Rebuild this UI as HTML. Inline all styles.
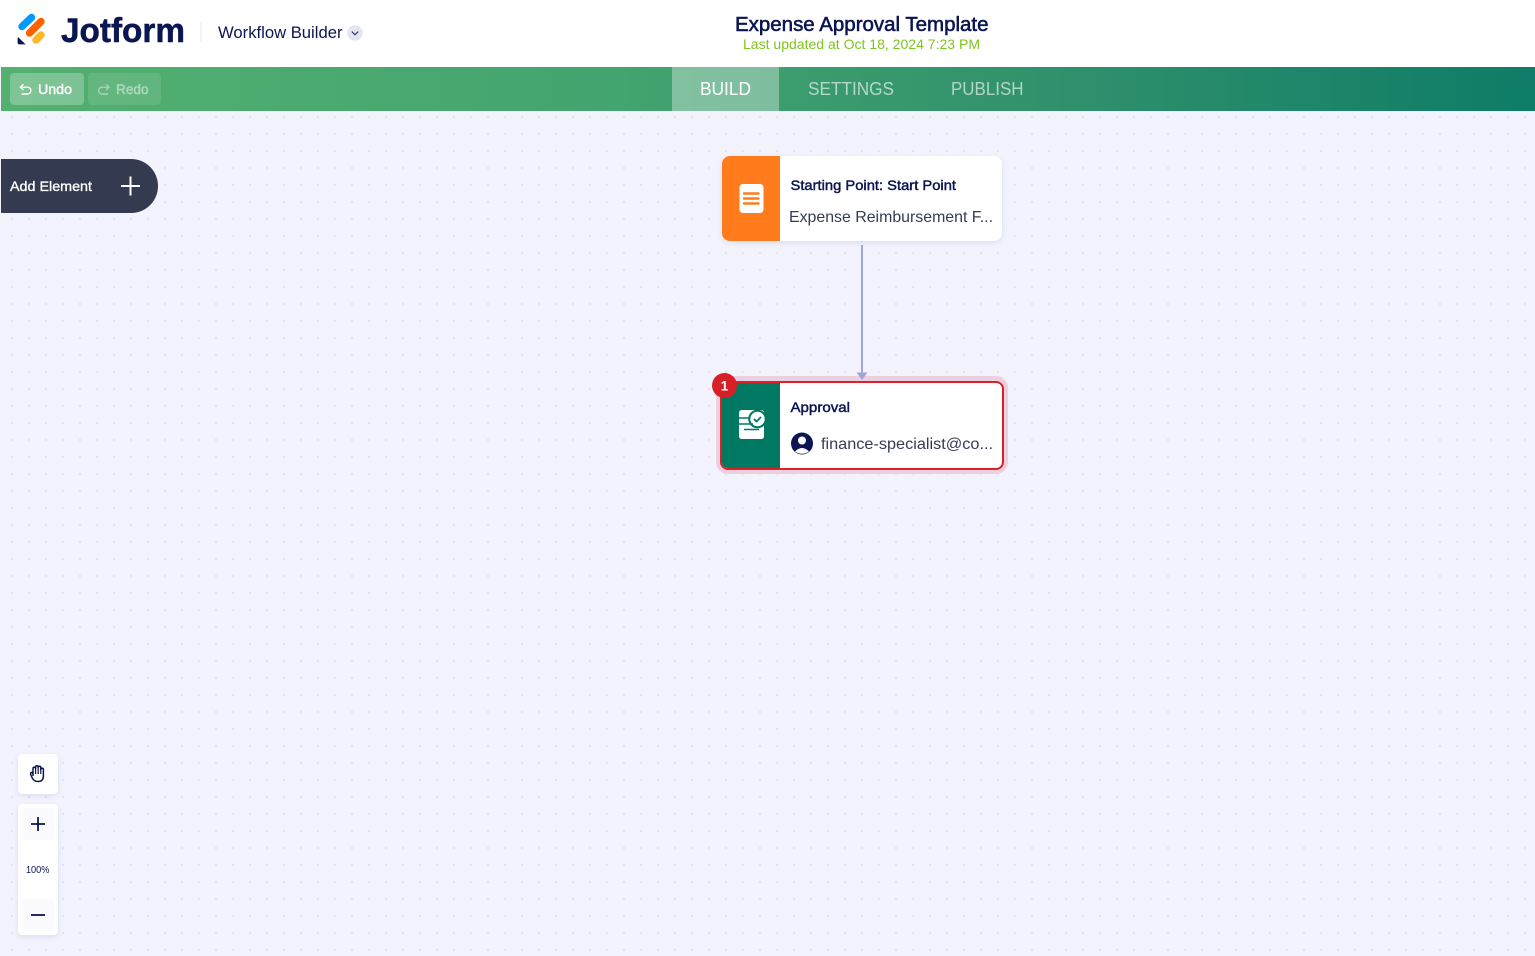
<!DOCTYPE html>
<html lang="en">
<head>
<meta charset="utf-8">
<title>Expense Approval Template</title>
<style>
html,body{margin:0;padding:0;width:1535px;height:956px;overflow:hidden;background:#f3f3fe;}
body{position:relative;font-family:"Liberation Sans",sans-serif;}
div{position:absolute;box-sizing:border-box;}
#canvas{left:0;top:111px;width:1535px;height:845px;background-color:#f3f3fe;background-image:radial-gradient(circle at 12px 6px,#e2e2f3 0,#e2e2f3 1px,transparent 1.4px);background-size:17px 17px;background-position:0 0;}
#header{left:0;top:0;width:1535px;height:67px;background:#fff;}
#bar{left:1px;top:67px;width:1534px;height:44px;background:linear-gradient(90deg,#54b070 0%,#43a46f 40%,#2f906c 70%,#0e7c67 100%);}
#tab{left:672px;top:67px;width:107px;height:44px;background:rgba(255,255,255,.34);}
#undo{left:10px;top:73px;width:74px;height:32px;border-radius:4px;background:rgba(255,255,255,.25);}
#redo{left:88px;top:73px;width:73px;height:32px;border-radius:4px;background:rgba(255,255,255,.1);}
#add{left:1px;top:159px;width:157px;height:54px;border-radius:0 27px 27px 0;background:#343a4f;}
#start{left:722px;top:156px;width:280px;height:85px;border-radius:8px;background:#fff;box-shadow:0 2px 6px rgba(60,65,130,.12);overflow:hidden;}
#startc{left:0;top:0;width:58px;height:85px;background:#ff7b1c;}
#halo{left:716px;top:376px;width:292px;height:98px;border-radius:12px;background:#edd0e0;}
#appr{left:720px;top:381px;width:284px;height:89px;border-radius:8px;background:#fff;border:2px solid #dd1f26;overflow:hidden;}
#apprc{left:0;top:0;width:58px;height:85px;background:#007862;}
#hand{left:18px;top:754px;width:40px;height:40px;border-radius:4px;background:#fff;box-shadow:0 2px 6px rgba(60,65,130,.12);}
#zoom{left:18px;top:804px;width:40px;height:131px;border-radius:4px;background:#fff;box-shadow:0 2px 6px rgba(60,65,130,.12);}
#zp{left:4px;top:4px;width:32px;height:32px;border-radius:4px;background:#fafaff;}
#zm{left:4px;top:95px;width:32px;height:32px;border-radius:4px;background:#fafaff;}
svg{position:absolute;left:0;top:0;filter:blur(.3px);}
text{font-family:"Liberation Sans",sans-serif;}
</style>
</head>
<body>
<div id="canvas"></div>
<div id="header"></div>
<div id="bar"></div>
<div id="tab"></div>
<div id="undo"></div>
<div id="redo"></div>
<div id="add"></div>
<div id="start"><div id="startc"></div></div>
<div id="halo"></div>
<div id="appr"><div id="apprc"></div></div>
<div id="hand"></div>
<div id="zoom"><div id="zp"></div><div id="zm"></div></div>

<svg width="1535" height="956" viewBox="0 0 1535 956" xmlns="http://www.w3.org/2000/svg">
  <!-- logo -->
  <line x1="22" y1="26.500" x2="31.500" y2="17.500" stroke="#0099ff" stroke-width="7.400" stroke-linecap="round"/>
  <line x1="29.500" y1="33" x2="41" y2="21.500" stroke="#ff6100" stroke-width="7.400" stroke-linecap="round"/>
  <line x1="36" y1="40" x2="41" y2="35" stroke="#ffb629" stroke-width="7.400" stroke-linecap="round"/>
  <path d="M18.600 37.600 L25.600 44.400 L19.400 44.400 Q17.600 44.400 17.600 42.600 L17.600 38 Q17.800 37 18.600 37.600Z" fill="#0a1551"/>
  <text x="61" y="42" font-size="34" font-weight="700" fill="#0a1551" textLength="124" lengthAdjust="spacingAndGlyphs" stroke="#0a1551" stroke-width=".5">Jotform</text>
  <rect x="200.500" y="22" width="1" height="20" fill="#e6e7f2"/>
  <text x="218" y="38" font-size="17" fill="#0a1551" textLength="124.500" lengthAdjust="spacingAndGlyphs">Workflow Builder</text>
  <circle cx="355" cy="33" r="7.800" fill="#e3e5f5"/>
  <path d="M351.800 31.600 L355 34.800 L358.200 31.600" fill="none" stroke="#343c6a" stroke-width="1.200"/>

  <!-- title -->
  <text x="735" y="31" font-size="20" fill="#0a1551" stroke="#0a1551" stroke-width=".55" textLength="253.500" lengthAdjust="spacingAndGlyphs">Expense Approval Template</text>
  <text x="743" y="49" font-size="14" fill="#7ec41f" textLength="237" lengthAdjust="spacingAndGlyphs">Last updated at Oct 18, 2024 7:23 PM</text>

  <!-- tabs -->
  <text x="700" y="95" font-size="18" fill="#fff" textLength="51" lengthAdjust="spacingAndGlyphs">BUILD</text>
  <text x="808" y="95" font-size="18" fill="#fff" fill-opacity=".62" textLength="86" lengthAdjust="spacingAndGlyphs">SETTINGS</text>
  <text x="951" y="95" font-size="18" fill="#fff" fill-opacity=".62" textLength="72.500" lengthAdjust="spacingAndGlyphs">PUBLISH</text>

  <!-- undo / redo -->
  <path d="M23.500 84.200 L20.300 87.200 L23.500 90 M20.600 87.200 H27.500 a3.400 3.400 0 0 1 0 6.800 H21.500" fill="none" stroke="#fff" stroke-width="1.400"/>
  <text x="38" y="94" font-size="14" fill="#fff" stroke="#fff" stroke-width=".4" textLength="34" lengthAdjust="spacingAndGlyphs">Undo</text>
  <path d="M106 84.200 L109.200 87.200 L106 90 M108.900 87.200 H102 a3.400 3.400 0 0 0 0 6.800 H108" fill="none" stroke="#fff" stroke-opacity=".42" stroke-width="1.400"/>
  <text x="116" y="94" font-size="14" fill="#fff" fill-opacity=".42" stroke="#fff" stroke-opacity=".42" stroke-width=".4" textLength="32.500" lengthAdjust="spacingAndGlyphs">Redo</text>

  <!-- add element -->
  <text x="10" y="191" font-size="14" fill="#fff" stroke="#fff" stroke-width=".35" textLength="82" lengthAdjust="spacingAndGlyphs">Add Element</text>
  <path d="M121 186 H140 M130.500 176.500 V195.500" stroke="#fff" stroke-width="2"/>

  <!-- start card -->
  <rect x="739.500" y="184" width="24" height="29" rx="3.500" fill="#fff"/>
  <path d="M744 193.500 H758.500 M744 198.500 H758.500 M744 203.500 H758.500" stroke="#ff7b1c" stroke-width="2.400" stroke-linecap="round"/>
  <text x="790.500" y="190" font-size="14" fill="#0a1551" stroke="#0a1551" stroke-width=".45" textLength="165.500" lengthAdjust="spacingAndGlyphs">Starting Point: Start Point</text>
  <text x="789" y="222" font-size="16" fill="#343c55" textLength="204" lengthAdjust="spacingAndGlyphs">Expense Reimbursement F...</text>

  <!-- connector -->
  <rect x="861" y="245" width="2" height="129" fill="#a0a6d6"/>
  <path d="M856.500 372.500 H867.500 L862 380Z" fill="#a0a6d6"/>

  <!-- approval card -->
  <path d="M742 410 H761 Q764 410 764 413 V436 Q764 439 761 439 H742 Q739 439 739 436 V413 Q739 410 742 410Z" fill="#fff"/>
  <circle cx="757.500" cy="419" r="9.300" fill="#007862"/>
  <circle cx="757.500" cy="419" r="7.200" fill="#fff"/>
  <path d="M754 419 L756.500 421.500 L761 417" fill="none" stroke="#007862" stroke-width="1.800"/>
  <path d="M739 418 H749 M739 424 H753 M744 429.500 H759" stroke="#007862" stroke-width="1.500"/>
  <text x="790.500" y="412" font-size="14" fill="#0a1551" stroke="#0a1551" stroke-width=".45" textLength="59.500" lengthAdjust="spacingAndGlyphs">Approval</text>
  <circle cx="802" cy="443.500" r="11" fill="#0a1551"/>
  <circle cx="802" cy="440.500" r="4" fill="#fff"/>
  <path d="M795 451.500 Q802 444.500 809 451.500 Q802 456 795 451.500Z" fill="#fff"/>
  <text x="821" y="449" font-size="16" fill="#343c55" textLength="172" lengthAdjust="spacingAndGlyphs">finance-specialist@co...</text>
  <circle cx="724.500" cy="385.500" r="12.500" fill="#d61f26"/>
  <text x="724.500" y="390.500" font-size="13.500" font-weight="700" fill="#fff" text-anchor="middle">1</text>

  <!-- hand -->
  <path d="M33 776 V768.500 a1.300 1.300 0 0 1 2.600 0 V767 a1.300 1.300 0 0 1 2.600 0 V767.500 a1.300 1.300 0 0 1 2.600 0 V769.500 a1.300 1.300 0 0 1 2.600 0 V776 Q43.400 781.500 38 781.500 Q34.500 781.500 32.500 778.500 L30.700 774.500 Q30.200 772 32 772.500 L33 774" fill="none" stroke="#0a1551" stroke-width="1.500" stroke-linejoin="round"/>
  <path d="M35.600 768.500 V774 M38.200 767 V774 M40.800 767.500 V774" stroke="#0a1551" stroke-width="1.200"/>

  <!-- zoom -->
  <path d="M31 824 H45 M38 817 V831" stroke="#0a1551" stroke-width="1.800"/>
  <text x="37.700" y="873" font-size="10" fill="#0a1551" text-anchor="middle" textLength="23.500" lengthAdjust="spacingAndGlyphs">100%</text>
  <path d="M31 915 H45" stroke="#0a1551" stroke-width="1.800"/>
</svg>
</body>
</html>
